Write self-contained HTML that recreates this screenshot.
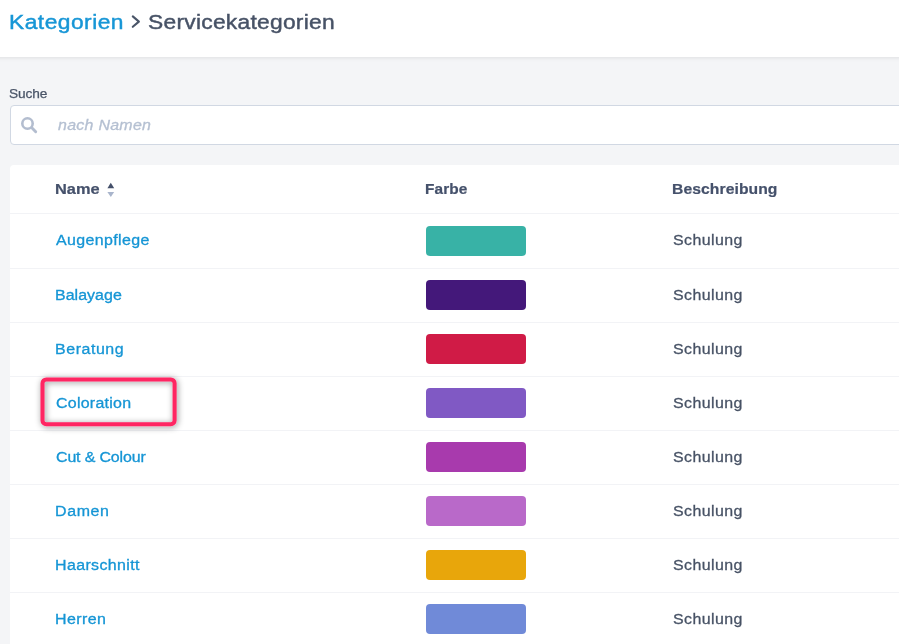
<!DOCTYPE html>
<html lang="de">
<head>
<meta charset="utf-8">
<title>Servicekategorien</title>
<style>
html,body{margin:0;padding:0;}
body{width:899px;height:644px;overflow:hidden;position:relative;background:#f4f5f7;font-family:"Liberation Sans",sans-serif;color:#4a5568;}
.t{position:absolute;white-space:nowrap;line-height:1;transform-origin:0 0;display:block;}
#hdr{position:absolute;left:-20px;top:0;width:939px;height:57px;background:#fff;box-shadow:0 1px 4px rgba(0,0,0,.085);}
.h1{font-size:20px;font-weight:400;-webkit-text-stroke:0.42px currentColor;}
.blue{color:#1796d6;}
.lbl{font-size:12px;color:#4a5568;-webkit-text-stroke:0.25px currentColor;}
#search{position:absolute;left:10px;top:105px;width:920px;height:38px;background:#fff;border:1px solid #d1d8e3;border-radius:4px;}
.ph{font-size:14px;font-style:italic;color:#b5c0d2;-webkit-text-stroke:0.3px currentColor;}
#card{position:absolute;left:10px;top:165px;width:920px;height:500px;background:#fff;border-radius:4px 0 0 0;}
.th{font-size:14px;font-weight:700;color:#45516b;-webkit-text-stroke:0.2px currentColor;}
.nm{font-size:14px;color:#1595d5;-webkit-text-stroke:0.3px currentColor;}
.td{font-size:14px;color:#475265;-webkit-text-stroke:0.27px currentColor;}
.sep{position:absolute;left:10px;width:889px;height:1px;background:#f2f3f6;}
.sw{position:absolute;left:426px;width:100px;height:30px;border-radius:4px;}
svg{position:absolute;overflow:visible;}
</style>
</head>
<body>
<div id="hdr"></div>
<span class="t h1 blue" id="t1" style="left:8.5px;top:12px;transform:scaleX(1.14);letter-spacing:0.412px;">Kategorien</span>
<svg style="left:130px;top:14px;" width="12" height="16" viewBox="0 0 12 16"><path d="M2.8 2.4 L8.9 7.6 L2.8 12.8" fill="none" stroke="#4a5568" stroke-width="2.1" stroke-linecap="round" stroke-linejoin="round"/></svg>
<span class="t h1" id="t2" style="left:148.15px;top:12px;transform:scaleX(1.14);letter-spacing:0.226px;color:#475266;">Servicekategorien</span>

<span class="t lbl" id="t3" style="left:9.3px;top:88px;transform:scaleX(1.14);letter-spacing:-0.116px;">Suche</span>
<div id="search"></div>
<svg style="left:20px;top:116px;" width="18" height="18" viewBox="20 116 18 18"><circle cx="27.5" cy="123.5" r="5.2" fill="none" stroke="#b3bdcf" stroke-width="2.6"/><path d="M32.3 128.3 L35.7 131.7" stroke="#b3bdcf" stroke-width="2.9" stroke-linecap="round"/></svg>
<span class="t ph" id="t4" style="left:57.7px;top:118px;transform:scaleX(1.14);letter-spacing:0.235px;">nach Namen</span>

<div id="card"></div>
<span class="t th" id="t5" style="left:55.0px;top:182px;transform:scaleX(1.17);letter-spacing:0.023px;">Name</span>
<svg style="left:106px;top:182px;" width="10" height="16" viewBox="106 182 10 16"><path d="M107.4 188.2 L114.2 188.2 L110.8 182.8 Z" fill="#44506a"/><path d="M107.4 192 L114.2 192 L110.8 197 Z" fill="#a9b5cc"/></svg>
<span class="t th" id="t6" style="left:425.3px;top:182px;transform:scaleX(1.1);letter-spacing:0.082px;">Farbe</span>
<span class="t th" id="t7" style="left:672.3px;top:182px;transform:scaleX(1.12);letter-spacing:0.072px;">Beschreibung</span>
<div class="sep" style="top:213px;"></div>

<span class="t nm" id="n1" style="left:56.25px;top:233px;transform:scaleX(1.14);letter-spacing:0.326px;">Augenpflege</span>
<span class="t nm" id="n2" style="left:55.0px;top:288px;transform:scaleX(1.14);letter-spacing:0.034px;">Balayage</span>
<span class="t nm" id="n3" style="left:55.0px;top:342px;transform:scaleX(1.14);letter-spacing:0.486px;">Beratung</span>
<span class="t nm" id="n4" style="left:55.65px;top:396px;transform:scaleX(1.14);letter-spacing:0.227px;">Coloration</span>
<span class="t nm" id="n5" style="left:55.65px;top:450px;transform:scaleX(1.14);letter-spacing:-0.128px;">Cut &amp; Colour</span>
<span class="t nm" id="n6" style="left:55.0px;top:504px;transform:scaleX(1.14);letter-spacing:0.55px;">Damen</span>
<span class="t nm" id="n7" style="left:55.0px;top:558px;transform:scaleX(1.14);letter-spacing:0.325px;">Haarschnitt</span>
<span class="t nm" id="n8" style="left:55.0px;top:612px;transform:scaleX(1.14);letter-spacing:0.365px;">Herren</span>
<div class="sw" style="top:226px;background:#38b2a6;"></div>
<div class="sw" style="top:280px;background:#44187a;"></div>
<div class="sw" style="top:334px;background:#d01b46;"></div>
<div class="sw" style="top:388px;background:#8059c4;"></div>
<div class="sw" style="top:442px;background:#a83aad;"></div>
<div class="sw" style="top:496px;background:#b969c9;"></div>
<div class="sw" style="top:550px;background:#e8a60b;"></div>
<div class="sw" style="top:604px;background:#708ad8;"></div>
<span class="t td" id="d1" style="left:672.5px;top:233px;transform:scaleX(1.14);letter-spacing:0.349px;">Schulung</span>
<span class="t td" id="d2" style="left:672.5px;top:288px;transform:scaleX(1.14);letter-spacing:0.349px;">Schulung</span>
<span class="t td" id="d3" style="left:672.5px;top:342px;transform:scaleX(1.14);letter-spacing:0.349px;">Schulung</span>
<span class="t td" id="d4" style="left:672.5px;top:396px;transform:scaleX(1.14);letter-spacing:0.349px;">Schulung</span>
<span class="t td" id="d5" style="left:672.5px;top:450px;transform:scaleX(1.14);letter-spacing:0.349px;">Schulung</span>
<span class="t td" id="d6" style="left:672.5px;top:504px;transform:scaleX(1.14);letter-spacing:0.349px;">Schulung</span>
<span class="t td" id="d7" style="left:672.5px;top:558px;transform:scaleX(1.14);letter-spacing:0.349px;">Schulung</span>
<span class="t td" id="d8" style="left:672.5px;top:612px;transform:scaleX(1.14);letter-spacing:0.349px;">Schulung</span>
<div class="sep" style="top:268px;"></div>
<div class="sep" style="top:322px;"></div>
<div class="sep" style="top:376px;"></div>
<div class="sep" style="top:430px;"></div>
<div class="sep" style="top:484px;"></div>
<div class="sep" style="top:538px;"></div>
<div class="sep" style="top:592px;"></div>

<svg style="left:0;top:0;" width="899" height="644" viewBox="0 0 899 644">
<defs><filter id="ds" x="-20%" y="-40%" width="140%" height="180%"><feDropShadow dx="1.0" dy="1.0" stdDeviation="3" flood-color="#000" flood-opacity="0.45"/></filter></defs>
<rect x="42.5" y="379.4" width="132.1" height="44.9" rx="3.8" ry="3.8" fill="none" stroke="#ff2562" stroke-width="4.05" filter="url(#ds)"/>
</svg>
</body>
</html>
